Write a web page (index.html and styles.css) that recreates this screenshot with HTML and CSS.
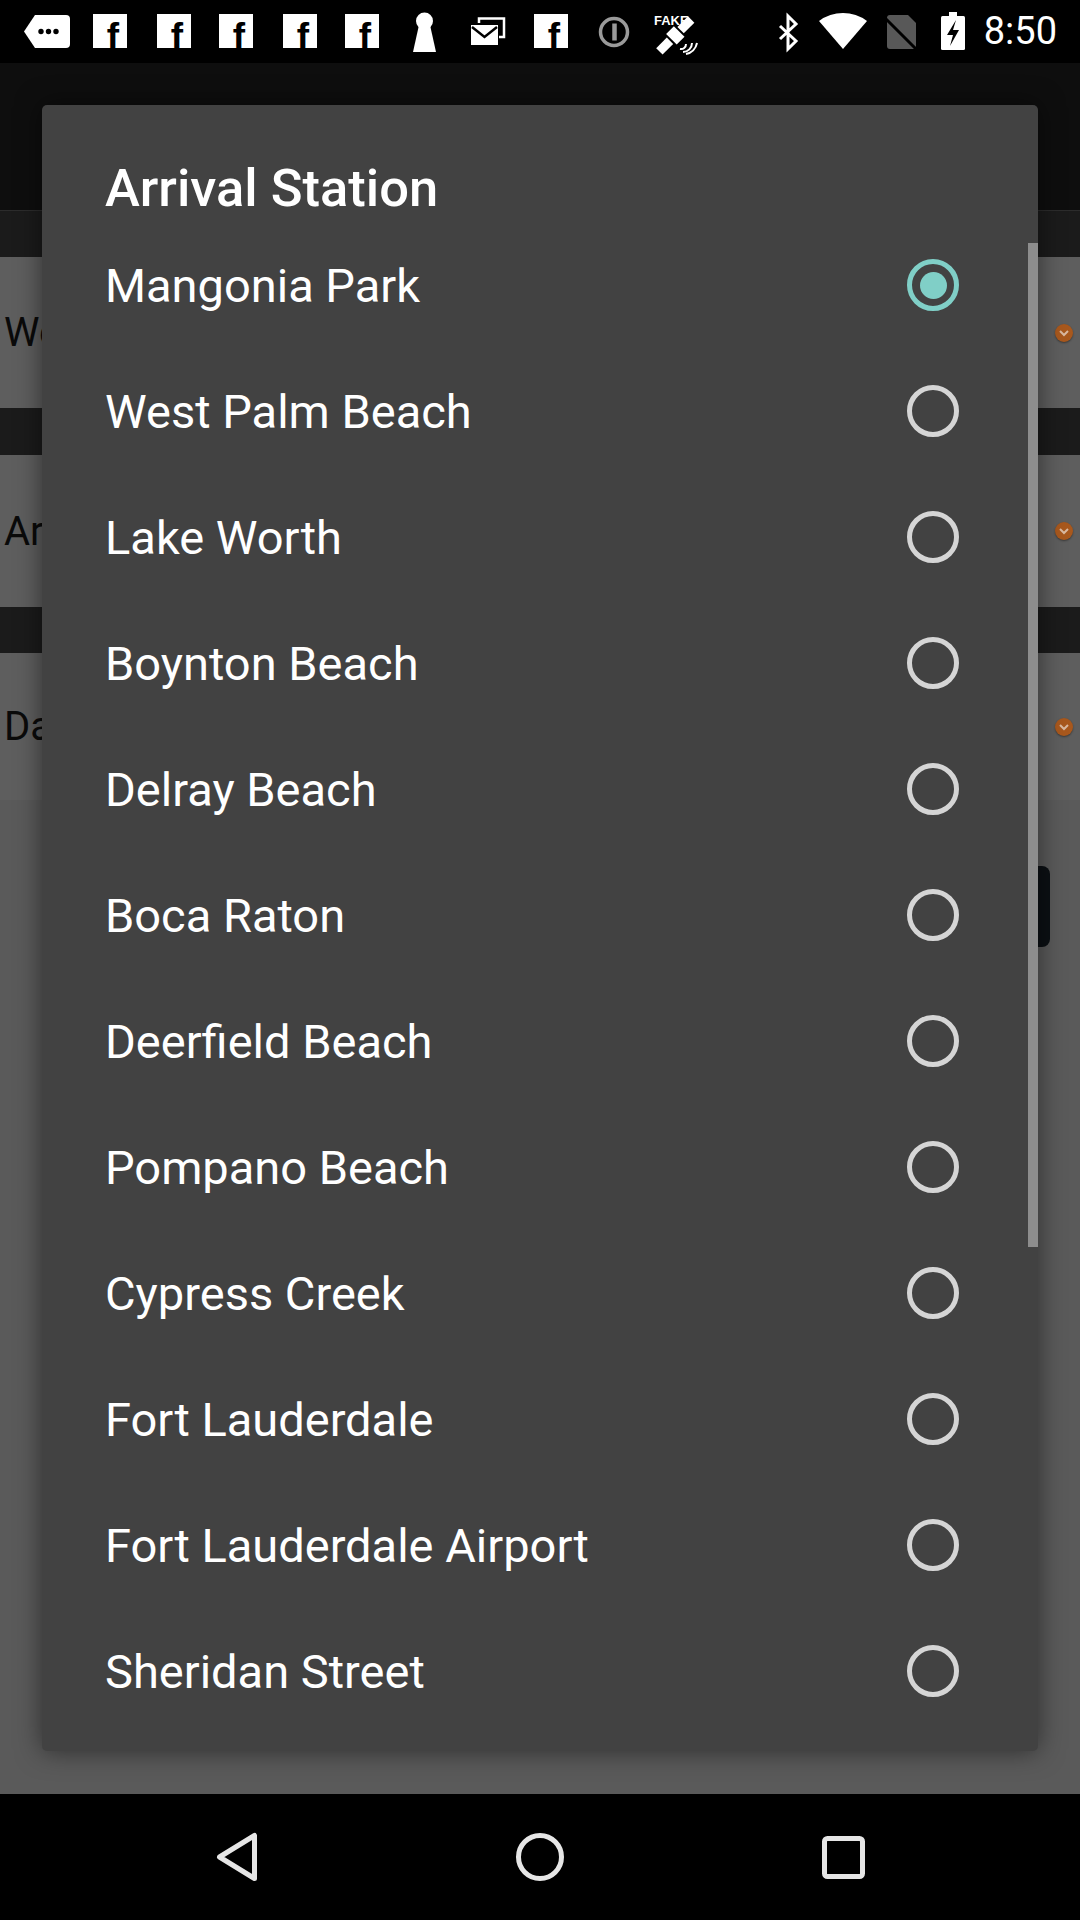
FILE: index.html
```html
<!DOCTYPE html>
<html lang="en">
<head>
<meta charset="utf-8">
<title>Arrival Station</title>
<link rel="stylesheet" href="styles.css">
</head>
<body>
<div class="screen">
  <header class="statusbar">
    <svg class="sb-left" viewBox="24 0 675 63" width="675" height="63" aria-hidden="true">
      <path d="M24 31.5 L35 15 H66 Q70 15 70 19 V44 Q70 48 66 48 H35 Z" fill="#fff"/>
      <circle cx="41" cy="31.5" r="2.7" fill="#000"/>
      <circle cx="48.5" cy="31.5" r="2.7" fill="#000"/>
      <circle cx="56" cy="31.5" r="2.7" fill="#000"/>
      <g class="fb">
        <rect x="93" y="14" width="34" height="34" fill="#fff"/>
        <text x="113" y="48.5" text-anchor="middle">f</text>
        <rect x="157" y="14" width="34" height="34" fill="#fff"/>
        <text x="177" y="48.5" text-anchor="middle">f</text>
        <rect x="219" y="14" width="34" height="34" fill="#fff"/>
        <text x="239" y="48.5" text-anchor="middle">f</text>
        <rect x="283" y="14" width="34" height="34" fill="#fff"/>
        <text x="303" y="48.5" text-anchor="middle">f</text>
        <rect x="345" y="14" width="34" height="34" fill="#fff"/>
        <text x="365" y="48.5" text-anchor="middle">f</text>
        <rect x="534" y="14" width="34" height="34" fill="#fff"/>
        <text x="554" y="48.5" text-anchor="middle">f</text>
      </g>
      <circle cx="424.5" cy="21" r="8.5" fill="#fff"/>
      <path d="M419 25 H430 L436 52 H413 Z" fill="#fff"/>
      <path d="M479 23 V18.5 H504 V37 H499" fill="none" stroke="#fff" stroke-width="2.5"/>
      <rect x="471" y="25" width="27" height="20" fill="#fff"/>
      <path d="M472 27 L484.5 37 L497 27" fill="none" stroke="#000" stroke-width="2.5"/>
      <circle cx="614" cy="32" r="13.5" fill="none" stroke="#9a9a9a" stroke-width="3.5"/>
      <line x1="614.5" y1="23.5" x2="614.5" y2="40.5" stroke="#9a9a9a" stroke-width="4.5"/>
      <text class="fake" x="654" y="25">FAKE</text>
      <g transform="rotate(-45 676 34)" fill="#fff">
        <rect x="652" y="30" width="15" height="9"/>
        <rect x="669" y="27" width="11" height="15"/>
        <rect x="682" y="30" width="15" height="9"/>
      </g>
      <path d="M683 52 A 9 9 0 0 0 692 43 M686 54 A 14 14 0 0 0 697 43 M680 49 A 5 5 0 0 0 686 44" fill="none" stroke="#fff" stroke-width="2"/>
    </svg>
    <div class="sb-right">
      <svg viewBox="778 0 190 63" width="190" height="63" aria-hidden="true">
        <path d="M782 26 L798 41 L790 49 V16 L798 24 L782 39" fill="none" stroke="#fff" stroke-width="3"/>
        <path d="M845 49 L821 21 A 40 40 0 0 1 869 21 Z" fill="#fff"/>
        <path d="M889 18 Q889 15 892 15 H910 L918 23 V46 Q918 49 915 49 H892 Q889 49 889 46 Z" fill="#585858"/>
        <line x1="886" y1="17" x2="921" y2="52" stroke="#000" stroke-width="3"/>
        <rect x="951" y="12" width="8" height="5" fill="#fff"/>
        <rect x="943" y="16" width="24" height="34" rx="1.5" fill="#fff"/>
        <path d="M958 20 L949 35 H955 L952 46 L961 30 H955 Z" fill="#000"/>
      </svg>
      <span class="clock">8:50</span>
    </div>
  </header>

  <main class="app">
    <div class="toolbar"></div>
    <div class="sect sect-first"></div>
    <div class="field field-1"><span class="field-text">West Palm Beach</span><span class="chev"><svg viewBox="0 0 18 18" width="18" height="18"><path d="M5 7 L9 11 L13 7" fill="none" stroke="#d9b9a0" stroke-width="2"/></svg></span></div>
    <div class="sect"></div>
    <div class="field field-2"><span class="field-text">Arrival Station</span><span class="chev"><svg viewBox="0 0 18 18" width="18" height="18"><path d="M5 7 L9 11 L13 7" fill="none" stroke="#d9b9a0" stroke-width="2"/></svg></span></div>
    <div class="sect sect-last"></div>
    <div class="field field-3"><span class="field-text">Date</span><span class="chev"><svg viewBox="0 0 18 18" width="18" height="18"><path d="M5 7 L9 11 L13 7" fill="none" stroke="#d9b9a0" stroke-width="2"/></svg></span></div>
    <div class="rest"><div class="btn"></div></div>

    <section class="dialog" role="dialog" aria-labelledby="dlg-title">
      <h2 class="dialog-title" id="dlg-title">Arrival Station</h2>
      <ul class="options">
        <li class="option"><span class="label">Mangonia Park</span><span class="radio checked"></span></li>
        <li class="option"><span class="label">West Palm Beach</span><span class="radio"></span></li>
        <li class="option"><span class="label">Lake Worth</span><span class="radio"></span></li>
        <li class="option"><span class="label">Boynton Beach</span><span class="radio"></span></li>
        <li class="option"><span class="label">Delray Beach</span><span class="radio"></span></li>
        <li class="option"><span class="label">Boca Raton</span><span class="radio"></span></li>
        <li class="option"><span class="label">Deerfield Beach</span><span class="radio"></span></li>
        <li class="option"><span class="label">Pompano Beach</span><span class="radio"></span></li>
        <li class="option"><span class="label">Cypress Creek</span><span class="radio"></span></li>
        <li class="option"><span class="label">Fort Lauderdale</span><span class="radio"></span></li>
        <li class="option"><span class="label">Fort Lauderdale Airport</span><span class="radio"></span></li>
        <li class="option"><span class="label">Sheridan Street</span><span class="radio"></span></li>
      </ul>
      <div class="scroll-thumb"></div>
    </section>
  </main>

  <nav class="navbar">
    <svg class="nav-icon" viewBox="0 0 60 60" width="60" height="60" aria-label="Back"><path d="M47.5 8.5 V51.5 L12.5 30 Z" fill="none" stroke="#e6e6e6" stroke-width="5" stroke-linejoin="round"/></svg>
    <svg class="nav-icon" viewBox="0 0 60 60" width="60" height="60" aria-label="Home"><circle cx="30" cy="30" r="21.5" fill="none" stroke="#e6e6e6" stroke-width="5"/></svg>
    <svg class="nav-icon" viewBox="0 0 60 60" width="60" height="60" aria-label="Recents"><rect x="11.5" y="11.5" width="38" height="38" rx="3" fill="none" stroke="#e6e6e6" stroke-width="5"/></svg>
  </nav>
</div>
</body>
</html>
```

FILE: styles.css
```css
html, body {
  margin: 0;
  padding: 0;
  background: #000;
}

.screen {
  width: 1080px;
  height: 1920px;
  display: flex;
  flex-direction: column;
  overflow: hidden;
  font-family: Roboto, "Noto Sans", "Liberation Sans", sans-serif;
}

/* ---------- status bar ---------- */
.statusbar {
  height: 63px;
  flex: none;
  background: #000;
  display: flex;
  align-items: center;
  justify-content: space-between;
  padding: 0 23px 0 24px;
}

.sb-left,
.sb-right svg {
  display: block;
}

.fb text {
  font-family: "Liberation Sans", Arial, sans-serif;
  font-weight: 700;
  font-size: 37px;
  fill: #000;
}

.fake {
  font-family: "Liberation Sans", Arial, sans-serif;
  font-weight: 700;
  font-size: 13px;
  fill: #fff;
}

.sb-right {
  display: flex;
  align-items: center;
}

.clock {
  margin-left: 18px;
  color: #fff;
  font-family: Roboto, sans-serif;
  font-size: 38px;
  line-height: 63px;
}

/* ---------- dimmed app behind ---------- */
.app {
  position: relative;
  flex: none;
  height: 1731px;
  display: flex;
  flex-direction: column;
  background: #5a5a5a;
}

.toolbar {
  height: 147px;
  background: #0e0e0e;
}

.sect {
  height: 47px;
  background: #1b1b1b;
}

.sect-first {
  height: 46px;
  border-top: 1px solid #2c2c2c;
}

.sect-last {
  height: 46px;
}

.field {
  background: #5e5e5e;
  display: flex;
  align-items: center;
  justify-content: space-between;
  padding: 0 7px 0 4px;
  font-family: Roboto, "Liberation Sans", sans-serif;
  font-size: 40px;
  color: #0a0a0a;
}

.field-text {
  white-space: nowrap;
}

.field-1 { height: 151px; }
.field-2 { height: 152px; }
.field-3 { height: 147px; }

.chev {
  width: 18px;
  height: 18px;
  border-radius: 50%;
  background: #a8581d;
  box-shadow: 0 1px 2px rgba(0, 0, 0, 0.4);
}

.chev svg {
  display: block;
}

.rest {
  flex: 1;
  background: #5a5a5a;
}

.btn {
  margin: 66px 30px 0 auto;
  width: 420px;
  height: 81px;
  border-radius: 8px;
  background: #0c1014;
}

/* ---------- dialog ---------- */
.dialog {
  position: absolute;
  left: 42px;
  top: 42px;
  width: 996px;
  height: 1646px;
  background: #424242;
  border-radius: 5px;
  box-shadow: 0 0 26px rgba(0, 0, 0, 0.5);
}

.dialog-title {
  margin: 0;
  padding: 51px 0 0 63px;
  font-family: Roboto, sans-serif;
  font-weight: 500;
  font-size: 52.5px;
  line-height: 64px;
  height: 66px;
  color: #fff;
}

.options {
  list-style: none;
  margin: 0;
  padding: 0;
}

.option {
  height: 126px;
  display: flex;
  align-items: center;
  justify-content: space-between;
  padding: 0 79px 0 63px;
  font-family: Roboto, sans-serif;
  font-size: 47px;
  color: #fff;
}

.radio {
  flex: none;
  box-sizing: border-box;
  width: 52px;
  height: 52px;
  border: 5px solid #d5d5d5;
  border-radius: 50%;
  display: flex;
  align-items: center;
  justify-content: center;
}

.radio.checked {
  border-color: #80cfc7;
}

.radio.checked::after {
  content: "";
  width: 27px;
  height: 27px;
  border-radius: 50%;
  background: #80cfc7;
}

.scroll-thumb {
  position: absolute;
  right: 0;
  top: 138px;
  width: 10px;
  height: 1004px;
  background: #8d8d8d;
}

/* ---------- nav bar ---------- */
.navbar {
  flex: 1;
  background: #000;
  display: flex;
  align-items: center;
  gap: 243px;
  padding-left: 207px;
}

.nav-icon {
  display: block;
  flex: none;
}
```
